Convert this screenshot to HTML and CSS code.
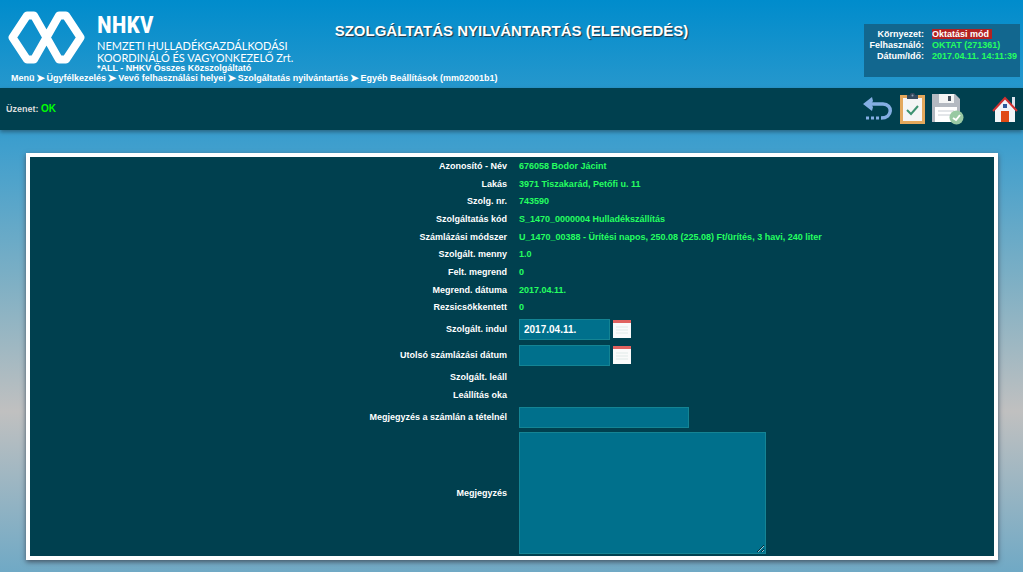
FILE: index.html
```html
<!DOCTYPE html>
<html lang="hu">
<head>
<meta charset="utf-8">
<title>Szolgáltatás nyilvántartás</title>
<link rel="stylesheet" href="styles.css">
</head>
<body>
<header class="header">
  <div class="brand">
    <svg class="logo" viewBox="0 0 77 53" aria-hidden="true">
      <path d="M19 4.500H26L51 48.500H58L72.500 26.500L58 4.500H51L26 48.500H19L4.500 26.500Z" fill="none" stroke="#fff" stroke-width="8" stroke-linejoin="round"/>
    </svg>
    <div class="brand-text">
      <div class="brand-name">NHKV</div>
      <div class="brand-sub">NEMZETI HULLADÉKGAZDÁLKODÁSI</div>
      <div class="brand-sub">KOORDINÁLÓ ÉS VAGYONKEZELŐ Zrt.</div>
      <div class="provider">*ALL - NHKV Összes Közszolgáltató</div>
    </div>
  </div>
  <h1 class="title">SZOLGÁLTATÁS NYILVÁNTARTÁS (ELENGEDÉS)</h1>
  <dl class="session">
    <dt>Környezet:</dt><dd><span class="mode">Oktatási mód</span></dd>
    <dt>Felhasználó:</dt><dd>OKTAT (271361)</dd>
    <dt>Dátum/Idő:</dt><dd>2017.04.11. 14:11:39</dd>
  </dl>
  <nav class="crumbs">
    <a href="#">Menü</a><span class="arrow">➤</span><a href="#">Ügyfélkezelés</a><span class="arrow">➤</span><a href="#">Vevő felhasználási helyei</a><span class="arrow">➤</span><a href="#">Szolgáltatás nyilvántartás</a><span class="arrow">➤</span><a href="#">Egyéb Beállítások (mm02001b1)</a>
  </nav>
</header>
<div class="toolbar">
  <p class="message">Üzenet: <span class="ok">OK</span></p>
  <div class="tools">
    <button class="tool" type="button" aria-label="Vissza">
      <svg width="30" height="32" viewBox="0 0 30 32"><path d="M6 11H20C30 11 30 25 18 25" fill="none" stroke="#84aee4" stroke-width="3.500"/><path d="M0 11L9 4L10 8L8 11L10 14L9 18Z" fill="#84aee4"/><path d="M3 25H16" stroke="#84aee4" stroke-width="3" stroke-dasharray="3 2"/></svg>
    </button>
    <button class="tool" type="button" aria-label="Ellenőrzés">
      <svg width="25" height="32" viewBox="0 0 25 32"><path d="M0 2H25V31H0Z" fill="#e3a85c"/><path d="M3 5H22V28H3Z" fill="#f4f5f5"/><path d="M7 6V2H10C10 -1 15 -1 15 2H18V6Z" fill="#34495e"/><circle cx="12.500" cy="2.500" r="1" fill="#8fa3b8"/><path d="M7 17L11 21L18 13" fill="none" stroke="#3d9270" stroke-width="2"/></svg>
    </button>
    <button class="tool" type="button" aria-label="Mentés">
      <svg width="32" height="32" viewBox="0 0 32 32"><path d="M0 1H23L28 6V29H0Z" fill="#b4b9c1"/><path d="M7 1H22V10H7Z" fill="#f4f5f5"/><path d="M16 3H19V8H16Z" fill="#46505e"/><path d="M3 14H25V29H3Z" fill="#fff"/><path d="M6 18H22M6 22H18" stroke="#c8cdd3"/><circle cx="24.500" cy="24.500" r="7" fill="#98c9a3"/><path d="M21 25L24 27L28 22" fill="none" stroke="#fff" stroke-width="2"/></svg>
    </button>
    <button class="tool tool-home" type="button" aria-label="Kezdőlap">
      <svg width="26" height="28" viewBox="0 0 26 28"><path d="M20 2H23V12H20Z" fill="#dbe4ee"/><path d="M3 14L13 3L23 14V27H3Z" fill="#f2f5f8"/><path d="M1 16L13 3L25 16" fill="none" stroke="#d03030" stroke-width="2"/><path d="M9 16H17V27H9Z" fill="#e04a14"/><path d="M11 9H15V13H11Z" fill="#2f5a9c"/></svg>
    </button>
  </div>
</div>
<main class="panel">
  <form>
    <table class="form">
      <tr><th scope="row">Azonosító - Név</th><td>676058 Bodor Jácint</td></tr>
      <tr><th scope="row">Lakás</th><td>3971 Tiszakarád, Petőfi u. 11</td></tr>
      <tr class="tight"><th scope="row">Szolg. nr.</th><td>743590</td></tr>
      <tr><th scope="row">Szolgáltatás kód</th><td>S_1470_0000004 Hulladékszállítás</td></tr>
      <tr><th scope="row">Számlázási módszer</th><td>U_1470_00388 - Ürítési napos, 250.08 (225.08) Ft/ürítés, 3 havi, 240 liter</td></tr>
      <tr class="tight"><th scope="row">Szolgált. menny</th><td>1.0</td></tr>
      <tr><th scope="row">Felt. megrend</th><td>0</td></tr>
      <tr><th scope="row">Megrend. dátuma</th><td>2017.04.11.</td></tr>
      <tr class="tight"><th scope="row">Rezsicsökkentett</th><td>0</td></tr>
      <tr class="field-row"><th scope="row"><label for="start">Szolgált. indul</label></th><td><div class="date"><input class="field" id="start" type="text" value="2017.04.11."><button class="calendar" type="button" aria-label="Naptár"><svg width="18" height="18" viewBox="0 0 18 18"><path d="M0 0H18V18H0Z" fill="#fafafa"/><path d="M0 0H18V3H0Z" fill="#e0625f"/><path d="M3 7H15M3 10H15M3 13H15" stroke="#e0eae8"/></svg></button></div></td></tr>
      <tr class="field-row"><th scope="row"><label for="last">Utolsó számlázási dátum</label></th><td><div class="date"><input class="field" id="last" type="text"><button class="calendar" type="button" aria-label="Naptár"><svg width="18" height="18" viewBox="0 0 18 18"><path d="M0 0H18V18H0Z" fill="#fafafa"/><path d="M0 0H18V3H0Z" fill="#e0625f"/><path d="M3 7H15M3 10H15M3 13H15" stroke="#e0eae8"/></svg></button></div></td></tr>
      <tr><th scope="row">Szolgált. leáll</th><td></td></tr>
      <tr><th scope="row">Leállítás oka</th><td></td></tr>
      <tr class="field-row"><th scope="row"><label for="item-note">Megjegyzés a számlán a tételnél</label></th><td><input class="field field-wide" id="item-note" type="text"></td></tr>
      <tr><th scope="row"><label for="note">Megjegyzés</label></th><td><textarea class="field note" id="note"></textarea></td></tr>
    </table>
  </form>
</main>
</body>
</html>
```
FILE: styles.css
```css
* { box-sizing: border-box; }
html { min-height: 100%; background: linear-gradient(#008ccc 0, #409fcd 26%, #80b0c4 50%, #c0c0c0 72%, #70a9c5 100%); }
body { margin: 0; font: bold 9px/11px "Liberation Sans", Arial, sans-serif; color: #fff; }
button { padding: 0; border: 0; background: none; cursor: pointer; }
svg { display: block; }
.header { display: grid; grid-template-columns: 1fr auto 1fr; grid-template-rows: 73px 15px; }
.brand { display: flex; gap: 12px; padding: 11px 0 0 8px; }
.logo { width: 77px; height: 53px; flex: none; }
.brand-text { white-space: nowrap; }
.brand-name { font: bold 24px/29px "Liberation Sans Narrow", "Roboto Condensed", "Open Sans Condensed", "DejaVu Sans Condensed", sans-serif; }
.brand-sub { font: 11px/12px Lato, sans-serif; }
.provider { line-height: 9px; }
.title { margin: 22px 0 0; font-size: 15px; line-height: 18px; text-shadow: 1px 1px 1px #234; }
.session { justify-self: end; display: grid; grid-template-columns: 60px 88px; column-gap: 8px; align-content: start; height: 53px; margin: 24px 3px 0 0; padding-top: 5px; background: #12678f; }
.session dt { text-align: right; }
.session dd { margin: 0; color: #25ff60; white-space: nowrap; }
.mode { color: #fff; background: #b22222; padding-right: 3px; }
.crumbs { grid-column: 1 / -1; display: flex; gap: 1px; padding-left: 11px; }
.crumbs a { color: #fff; text-decoration: none; }
.arrow { font-family: "DejaVu Sans", sans-serif; font-size: 12px; line-height: 10px; }
.toolbar { display: flex; align-items: center; justify-content: space-between; height: 42px; padding: 0 5px 0 6px; background: #00404f; box-shadow: 0 2px 4px #2b6582; }
.message { margin: 0; color: #ddd; }
.ok { color: #0f0; font-size: 10px; }
.tools { display: flex; align-items: center; gap: 7px; }
.tool-home { margin-left: 21px; }
.panel { margin: 23px 25px 12px 26px; border: 4px solid #fff; background: #00404f; box-shadow: 0 2px 5px #456; }
.form { width: 100%; table-layout: fixed; border-collapse: collapse; }
.form th, .form td { height: 18px; padding: 0 5px 0 0; text-align: right; vertical-align: middle; }
.form .tight > * { height: 17px; }
.form td { padding: 0 0 0 7px; text-align: left; color: #25ff60; }
.form .field-row > * { height: 26px; }
.date { display: flex; align-items: center; gap: 3px; }
.field { display: block; width: 91px; height: 21px; margin: 0; padding: 0 4px; border: 1px solid #148494; background: #00708c; color: #fff; font: bold 10px/12px "Liberation Sans", Arial, sans-serif; }
.field-wide { width: 170px; }
.note { width: 247px; height: 122px; margin: 2px 0; }
```
